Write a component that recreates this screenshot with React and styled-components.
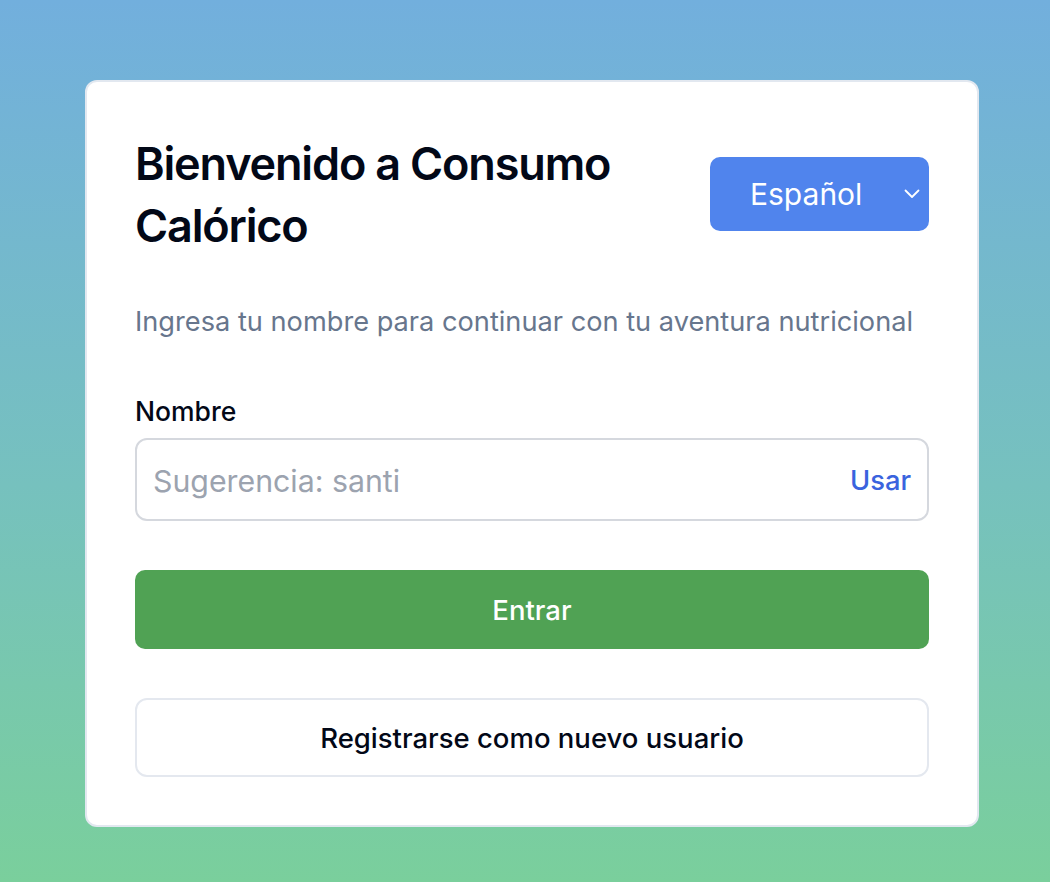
import React from "react";
import styled, { createGlobalStyle } from "styled-components";

const Global = createGlobalStyle`
  html, body { margin: 0; padding: 0; }
  body {
    font-family: Inter, "Noto Sans", "Liberation Sans", sans-serif;
    -webkit-font-smoothing: antialiased;
  }
`;

const Page = styled.div`
  width: 1050px;
  height: 882px;
  box-sizing: border-box;
  padding: 80px 71px 0 85px;
  background: linear-gradient(180deg, #72afdd 0%, #76c1be 55%, #7acf9c 100%);
  overflow: hidden;
`;

const Card = styled.div`
  box-sizing: border-box;
  width: 894px;
  background: #ffffff;
  border: 2px solid #e2e8f0;
  border-radius: 12px;
  padding: 47px 48px 48px 48px;
  display: flex;
  flex-direction: column;
`;

const Header = styled.div`
  display: flex;
  align-items: center;
  justify-content: space-between;
  gap: 24px;
`;

const Title = styled.h1`
  margin: 4px 0 0 0;
  width: 520px;
  font-size: 45px;
  line-height: 62px;
  font-weight: 600;
  letter-spacing: -0.026em;
  color: #020817;
`;

const SelectBox = styled.div`
  position: relative;
  width: 219px;
  height: 74px;
  box-sizing: border-box;
  border-radius: 10px;
  background: #5084ed;
  color: #ffffff;
  display: flex;
  align-items: center;
  padding-left: 40px;
  font-size: 30px;
  margin-top: 2px;
`;

const Chevron = styled.svg`
  position: absolute;
  right: 9px;
  top: 50%;
  transform: translateY(-50%);
`;

const Subtitle = styled.p`
  margin: 47px 0 0 0;
  font-size: 27.2px;
  line-height: 36px;
  color: #67768d;
`;

const Label = styled.label`
  margin-top: 53px;
  font-size: 26.5px;
  line-height: 36px;
  font-weight: 500;
  color: #020817;
`;

const InputWrap = styled.div`
  margin-top: 9px;
  height: 83px;
  box-sizing: border-box;
  border: 2px solid #d5d8de;
  border-radius: 12px;
  display: flex;
  align-items: center;
  justify-content: space-between;
  padding: 2px 16px 0 16px;
`;

const Placeholder = styled.span`
  font-size: 30.3px;
  color: #9ca3af;
`;

const UseLink = styled.span`
  font-size: 27.3px;
  font-weight: 500;
  color: #3a63de;
`;

const Button = styled.div`
  margin-top: 49px;
  height: 79px;
  box-sizing: border-box;
  border-radius: ${(p) => (p.$primary ? "10px" : "12px")};
  display: flex;
  align-items: center;
  justify-content: center;
  font-size: 27.5px;
  font-weight: ${(p) => (p.$primary ? 500 : 450)};
  background: ${(p) => (p.$primary ? "#50a254" : "#ffffff")};
  color: ${(p) => (p.$primary ? "#ffffff" : "#020817")};
  border: ${(p) => (p.$primary ? "none" : "2px solid #e4e8ef")};
`;

export default function App() {
  return (
    <>
      <Global />
      <Page>
        <Card>
          <Header>
            <Title>Bienvenido a Consumo Calórico</Title>
            <SelectBox>
              Español
              <Chevron width="16" height="10" viewBox="0 0 16 10" fill="none">
                <path d="M1.5 1.5 L8 8 L14.5 1.5" stroke="#ffffff" strokeWidth="1.8" strokeLinecap="round" strokeLinejoin="round" />
              </Chevron>
            </SelectBox>
          </Header>
          <Subtitle>Ingresa tu nombre para continuar con tu aventura nutricional</Subtitle>
          <Label>Nombre</Label>
          <InputWrap>
            <Placeholder>Sugerencia: santi</Placeholder>
            <UseLink>Usar</UseLink>
          </InputWrap>
          <Button $primary>Entrar</Button>
          <Button>Registrarse como nuevo usuario</Button>
        </Card>
      </Page>
    </>
  );
}
